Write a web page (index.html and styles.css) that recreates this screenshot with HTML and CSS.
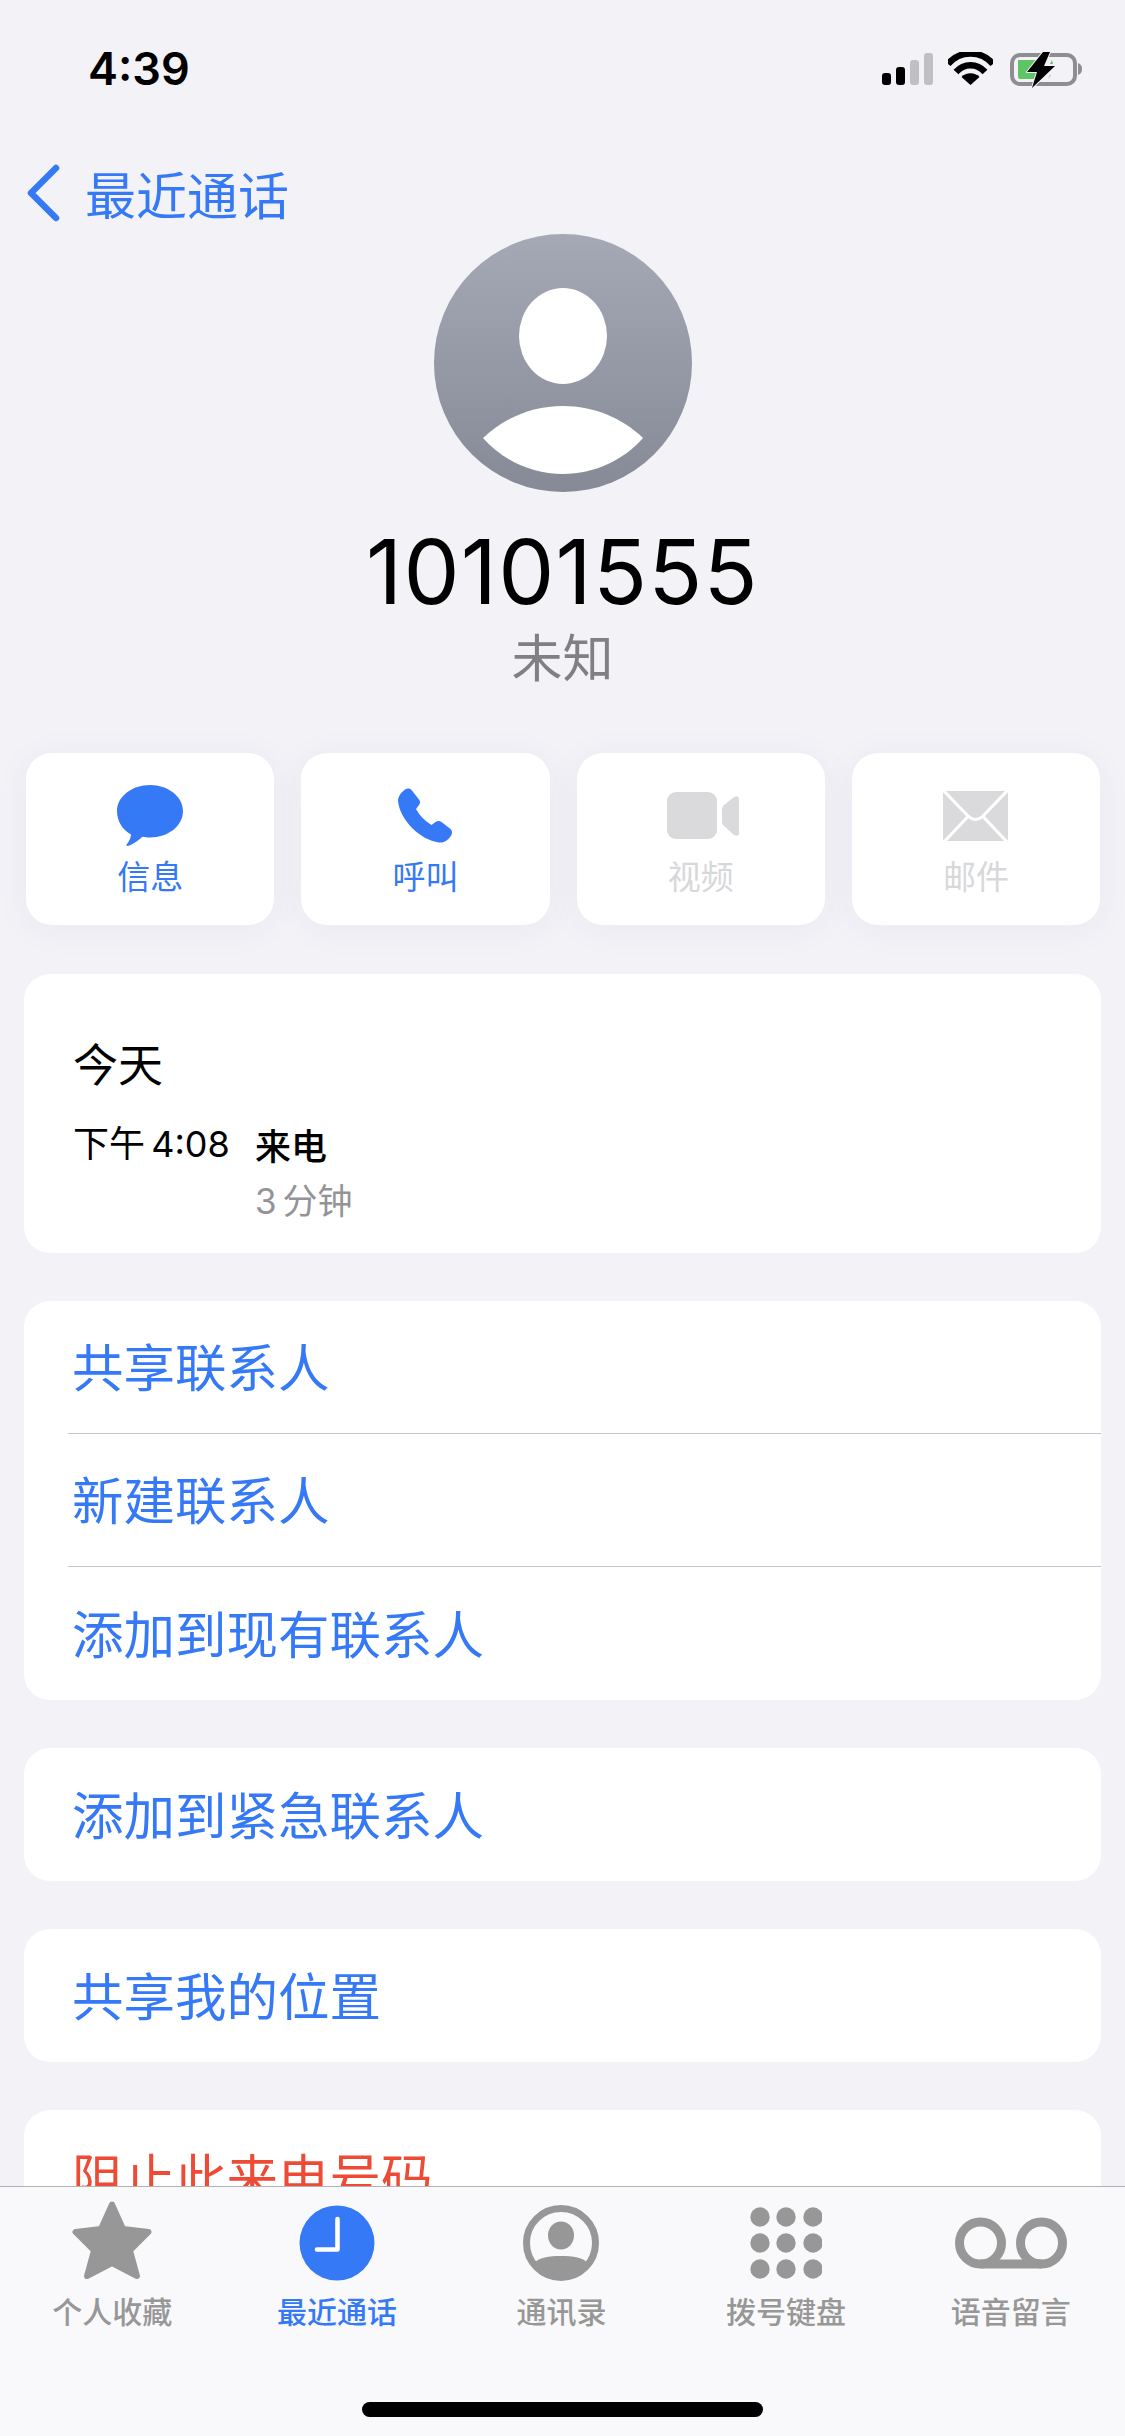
FILE: index.html
```html
<!DOCTYPE html>
<html lang="zh-CN">
<head>
  <meta charset="UTF-8">
  <meta name="viewport" content="width=device-width, initial-scale=1.0">
  <title>最近通话</title>
  <link rel="stylesheet" href="styles.css">
</head>
<body>
  <div class="phone">
    <div class="content">
      <div class="status">
        <span class="clock">4:39</span>
        <div class="status-icons">
          <svg width="51" height="32" viewBox="0 0 51 32">
            <rect x="0" y="20" width="9" height="12" rx="3" fill="#000"/>
            <rect x="14" y="14" width="9" height="18" rx="3" fill="#000"/>
            <rect x="28" y="7" width="9" height="25" rx="3" fill="#c0c0c4"/>
            <rect x="42" y="0" width="9" height="32" rx="3" fill="#c0c0c4"/>
          </svg>
          <svg class="wifi" width="45" height="33" viewBox="0 0 45 33">
            <path d="M0 12 C12 -2 33 -2 45 12" fill="none" stroke="#000" stroke-width="6.5"/>
            <path d="M8 20 C16 11 29 11 37 20" fill="none" stroke="#000" stroke-width="6.5"/>
            <path d="M22.5 33 L13.5 25 C18 20 27 20 31.5 25 Z" fill="#000"/>
          </svg>
          <svg class="battery" width="73" height="36" viewBox="0 0 73 36">
            <rect x="2" y="3" width="63" height="29" rx="8" fill="none" stroke="#8e8e92" stroke-width="4"/>
            <path d="M68 11 C71 12 72 14 72 17 C72 20 71 22 68 23 Z" fill="#8e8e92"/>
            <path d="M8 8 H32 L24 19 H27 L26 27 H10 Q8 27 8 25 Z" fill="#5ec464"/>
            <path d="M40 12 L42 8 L43 12 Z M38 27 L40 23 L41 23 Z" fill="#5ec464"/>
            <path d="M33 0 L17 20 H27 L22 36 L45 14 H34 L40 0 Z" fill="#000" stroke="#f2f2f7" stroke-width="2" stroke-linejoin="round" paint-order="stroke"/>
          </svg>
        </div>
      </div>

      <div class="nav">
        <svg width="34" height="58" viewBox="0 0 34 58">
          <path d="M30 4 L5 29 L30 54" fill="none" stroke="#3579f6" stroke-width="6.5" stroke-linecap="round" stroke-linejoin="round"/>
        </svg>
        <span class="nav-title">最近通话</span>
      </div>

      <div class="profile">
        <svg class="avatar" width="258" height="258" viewBox="0 0 258 258">
          <defs>
            <linearGradient id="avatarFill" x1="0" y1="0" x2="0" y2="1">
              <stop offset="0" stop-color="#a5a9b5"/>
              <stop offset="1" stop-color="#858a96"/>
            </linearGradient>
          </defs>
          <circle cx="129" cy="129" r="129" fill="url(#avatarFill)"/>
          <ellipse cx="129" cy="102" rx="44" ry="48" fill="#fff"/>
          <path d="M49 204 C70 184 98 172 129 172 C160 172 188 184 209 204 C190 226 160 240 129 240 C98 240 68 226 49 204 Z" fill="#fff"/>
        </svg>
        <div class="number">10101555</div>
        <div class="label">未知</div>
      </div>

      <div class="actions">
        <div class="action">
          <div class="action-icon">
            <svg width="66" height="61" viewBox="0 0 66 61">
              <path d="M33 0 C51 0 66 11.500 66 26 C66 41 51 52.500 33 52.500 C30 52.500 28 52.300 25.500 51.800 C21 56 15 60 10.500 61 C9.500 61 9 60 10 59 C12 56.500 13.800 53.500 14 49.500 C5.500 45 0 36 0 26 C0 11.500 15 0 33 0 Z" fill="#3579f6"/>
            </svg>
          </div>
          <span class="action-name">信息</span>
        </div>
        <div class="action">
          <div class="action-icon">
            <svg width="54" height="55" viewBox="0 0 54 55">
              <path d="M7 1.500 C9 0 12 0 13.500 2 L21 11.500 C22.500 13.500 22.500 15 21 17 L18 21 C22 28 27 33 33.500 37 L37.500 34 C39.500 32.500 41.500 32.500 43.500 34 L52.500 41 C54.500 43 54.500 46 52.500 48.500 C49.500 52.500 46 55 41 54.500 C22 52 2 32 0 13 C0 8.500 3 4.500 7 1.500 Z" fill="#3579f6"/>
            </svg>
          </div>
          <span class="action-name">呼叫</span>
        </div>
        <div class="action off">
          <div class="action-icon">
            <svg class="video" width="72" height="48" viewBox="0 0 72 48">
              <rect x="0" y="0" width="50" height="47" rx="9" fill="#dadadc"/>
              <path d="M55 17 C55 15.500 55.500 14.500 57 13 L67 5 C69 3.500 72 4 72 7 V41 C72 44 69 44.500 67 43 L57 34 C55.500 32.500 55 31.500 55 30 Z" fill="#dadadc"/>
            </svg>
          </div>
          <span class="action-name">视频</span>
        </div>
        <div class="action off">
          <div class="action-icon">
            <svg width="65" height="50" viewBox="0 0 65 50">
              <rect width="65" height="50" rx="2" fill="#dadadc"/>
              <path d="M0 -1 L25 25 Q32.500 32 40 25 L65 -1 M1 51 L24.500 26 M64 51 L40.500 26" fill="none" stroke="#fff" stroke-width="3"/>
            </svg>
          </div>
          <span class="action-name">邮件</span>
        </div>
      </div>

      <div class="card history">
        <div class="history-day">今天</div>
        <div class="history-row">
          <span class="history-time">下午 4:08</span>
          <div>
            <div class="history-type">来电</div>
            <div class="history-len">3 分钟</div>
          </div>
        </div>
      </div>

      <div class="card">
        <div class="row">共享联系人</div>
        <div class="row">新建联系人</div>
        <div class="row">添加到现有联系人</div>
      </div>

      <div class="card">
        <div class="row">添加到紧急联系人</div>
      </div>

      <div class="card">
        <div class="row">共享我的位置</div>
      </div>

      <div class="card">
        <div class="row danger">阻止此来电号码</div>
      </div>
    </div>

    <div class="tabbar">
      <div class="tabs">
        <div class="tab">
          <div class="tab-icon">
            <svg class="star" width="80" height="78" viewBox="0 0 80 78">
              <path d="M40 3.500 L51 28 L76.500 31 L58 49.500 L65 75 L40 62 L15 75 L22 49.500 L3.500 31 L29 28 Z" fill="#979797" stroke="#979797" stroke-width="6" stroke-linejoin="round"/>
            </svg>
          </div>
          <span class="tab-name">个人收藏</span>
        </div>
        <div class="tab active">
          <div class="tab-icon">
            <svg width="76" height="76" viewBox="0 0 76 76">
              <circle cx="38" cy="38" r="37.500" fill="#3579f6"/>
              <path d="M38.500 14 V44.500 H18" fill="none" stroke="#fff" stroke-width="4.600" stroke-linecap="round" stroke-linejoin="round"/>
            </svg>
          </div>
          <span class="tab-name">最近通话</span>
        </div>
        <div class="tab">
          <div class="tab-icon">
            <svg width="76" height="76" viewBox="0 0 76 76">
              <circle cx="38" cy="38" r="34.500" fill="none" stroke="#979797" stroke-width="7"/>
              <ellipse cx="38" cy="30.500" rx="13" ry="14" fill="#979797"/>
              <path d="M10 59 C16 52 26 51 38 51 C50 51 60 52 66 59 C60 68 50 74 38 74 C26 74 16 68 10 59 Z" fill="#979797"/>
            </svg>
          </div>
          <span class="tab-name">通讯录</span>
        </div>
        <div class="tab">
          <div class="tab-icon">
            <svg width="72" height="72" viewBox="0 0 72 72" fill="#979797">
              <ellipse cx="10" cy="10" rx="9.700" ry="9.700"/>
              <ellipse cx="36" cy="10" rx="9.700" ry="9.700"/>
              <ellipse cx="63" cy="10" rx="9.700" ry="9.700"/>
              <ellipse cx="10" cy="36" rx="9.700" ry="9.700"/>
              <ellipse cx="36" cy="36" rx="9.700" ry="9.700"/>
              <ellipse cx="63" cy="36" rx="9.700" ry="9.700"/>
              <ellipse cx="10" cy="62" rx="9.700" ry="9.700"/>
              <ellipse cx="36" cy="62" rx="9.700" ry="9.700"/>
              <ellipse cx="63" cy="62" rx="9.700" ry="9.700"/>
            </svg>
          </div>
          <span class="tab-name">拨号键盘</span>
        </div>
        <div class="tab">
          <div class="tab-icon">
            <svg width="112" height="52" viewBox="0 0 112 52">
              <circle cx="25.500" cy="26" r="21" fill="none" stroke="#979797" stroke-width="9"/>
              <circle cx="86.500" cy="26" r="21" fill="none" stroke="#979797" stroke-width="9"/>
              <path d="M25.500 47 H86.500" fill="none" stroke="#979797" stroke-width="9"/>
            </svg>
          </div>
          <span class="tab-name">语音留言</span>
        </div>
      </div>
      <div class="home-bar"></div>
    </div>
  </div>
</body>
</html>
```

FILE: styles.css
```css
* {
  box-sizing: border-box;
}
body {
  margin: 0;
  font-family: "Noto Sans CJK SC", sans-serif;
  background-color: #f2f2f7;
}
svg {
  display: block;
}

.phone {
  display: flex;
  flex-direction: column;
  height: 2436px;
  overflow: hidden;
}
.content {
  flex: 1;
  min-height: 0;
  overflow: hidden;
  padding: 0 24px;
}

/* status bar */
.status {
  display: flex;
  justify-content: space-between;
  height: 152px;
  padding: 53px 18px 0 64px;
}
.clock {
  font-family: Inter, sans-serif;
  font-size: 45px;
  font-weight: 600;
  line-height: 32px;
  color: #000;
}
.status-icons {
  display: flex;
  align-items: flex-start;
}
.wifi {
  margin: -1px 0 0 15px;
}
.battery {
  margin: -1px 0 0 17px;
}

/* back link */
.nav {
  display: flex;
  align-items: center;
  gap: 25px;
  height: 82px;
  margin-left: 2px;
}
.nav-title {
  font-size: 51px;
  line-height: 60px;
  color: #3579f6;
}

/* avatar and number */
.profile {
  display: flex;
  flex-direction: column;
  align-items: center;
}
.number {
  margin-top: 30px;
  font-family: Inter, sans-serif;
  font-size: 89px;
  letter-spacing: 1.2px;
  line-height: 100px;
  color: #000;
}
.label {
  margin-top: 2px;
  font-size: 51px;
  line-height: 62px;
  color: #808084;
}

/* action buttons */
.actions {
  display: flex;
  gap: 27px;
  margin: 67px 1px 0 2px;
}
.action {
  display: flex;
  flex-direction: column;
  align-items: center;
  flex: 1;
  height: 172px;
  padding-top: 32px;
  border-radius: 26px;
  background-color: #fff;
  box-shadow: 0 4px 36px rgba(60, 60, 100, 0.05);
  color: #3579f6;
}
.action.off {
  color: #d8d8da;
}
.action-icon {
  display: flex;
  align-items: center;
  justify-content: center;
  height: 61px;
}
.action-name {
  margin-top: 7px;
  font-size: 33px;
  line-height: 44px;
}
.video {
  margin-left: 4px;
}

/* grouped cards */
.card {
  margin-top: 48px;
  border-radius: 26px;
  background-color: #fff;
}
.history {
  height: 279px;
  margin-top: 49px;
  padding: 59px 49px 0;
}
.history-day {
  font-size: 45px;
  line-height: 60px;
  color: #000;
}
.history-row {
  display: flex;
  margin-top: 26px;
}
.history-time {
  width: 182px;
  font-family: Inter, "Noto Sans CJK SC", sans-serif;
  font-size: 36px;
  word-spacing: -4px;
  line-height: 50px;
  color: #000;
}
.history-type {
  font-size: 36px;
  font-weight: 500;
  line-height: 50px;
  color: #000;
}
.history-len {
  margin-top: 7px;
  font-family: Inter, "Noto Sans CJK SC", sans-serif;
  font-size: 35px;
  word-spacing: -4px;
  line-height: 50px;
  color: #939398;
}
.row {
  display: flex;
  align-items: center;
  height: 133px;
  margin-left: 44px;
  padding: 0 0 5px 4px;
  border-bottom: 1.5px solid #c4c4c8;
  font-size: 51.5px;
  color: #3579f6;
}
.row:last-child {
  border-bottom: none;
}
.row.danger {
  color: #ee4b36;
}

/* tab bar */
.tabbar {
  flex: none;
  height: 250px;
  border-top: 1.5px solid #b2b2b4;
  background-color: #f9f9fb;
}
.tabs {
  display: flex;
  padding: 14px 2px 0 0;
}
.tab {
  display: flex;
  flex-direction: column;
  align-items: center;
  flex: 1;
  color: #979797;
}
.tab.active {
  color: #3579f6;
}
.tab-icon {
  display: flex;
  align-items: center;
  justify-content: center;
  height: 82px;
  padding-top: 2px;
}
.star {
  margin-top: -6px;
}
.tab-name {
  margin-top: 7px;
  font-size: 30px;
  font-weight: 500;
  line-height: 40px;
}
.home-bar {
  width: 401px;
  height: 15px;
  margin: 72px auto 0;
  border-radius: 8px;
  background-color: #000;
}
```
